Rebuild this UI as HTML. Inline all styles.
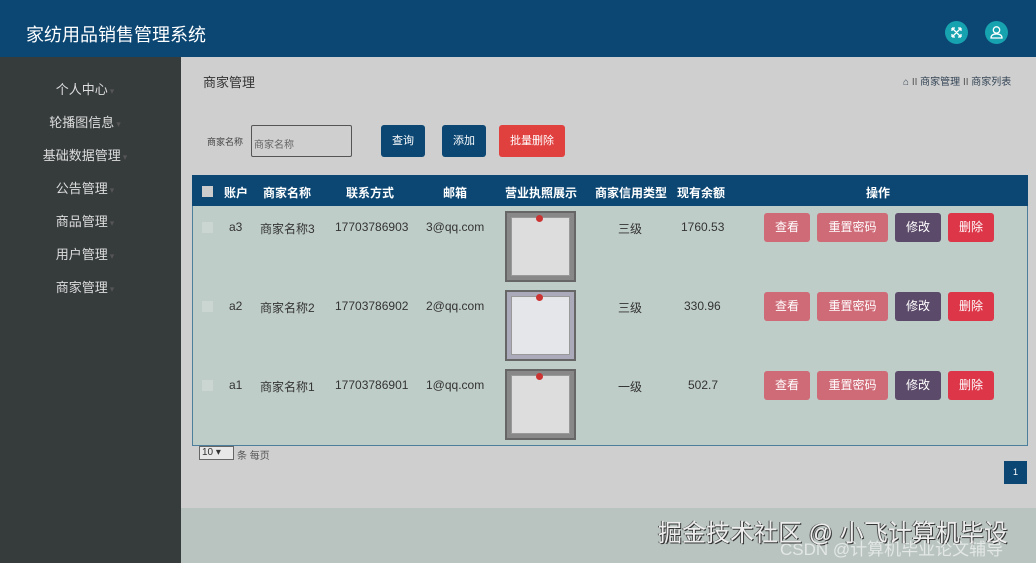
<!DOCTYPE html>
<html><head><meta charset="utf-8">
<style>
*{margin:0;padding:0;box-sizing:border-box}
body{width:1036px;height:563px;overflow:hidden;background:#cfcfcf;font-family:"Liberation Sans","Noto Sans CJK SC",sans-serif;position:relative;color:#333}
.a{position:absolute}
.hdr{left:0;top:0;width:1036px;height:57px;background:#0c4773}
.side{left:0;top:57px;width:181px;height:506px;background:#363b3c}
.mi{position:absolute;width:170px;text-align:center;color:#ddd;font-size:13px}
.mi span{color:#555;font-size:9px;margin-left:2px}
.btn{position:absolute;color:#fff;font-size:11px;text-align:center;border-radius:3px}
.th{position:absolute;top:184px;color:#fff;font-size:12px;font-weight:bold;text-align:center}
.td{position:absolute;font-size:12px;color:#333;text-align:center}
.img{position:absolute;left:505px;width:71px;height:71px;background:#888;border:2px solid #666}
.img div{position:absolute;left:4px;top:4px;right:4px;bottom:4px;background:#ddd;border:1px solid #999}
.img i{position:absolute;left:29px;top:2px;width:7px;height:7px;border-radius:50%;background:#c33}
.ob{position:absolute;height:29px;line-height:29px;color:#fff;font-size:12px;text-align:center;border-radius:3px}
</style></head><body>
<div class="a hdr"></div>
<div class="a" style="left:26px;top:21px;color:#fff;font-size:18px">家纺用品销售管理系统</div>
<div class="a" style="left:945px;top:21px;width:23px;height:23px;border-radius:50%;background:#17a2b0"><svg width="23" height="23" viewBox="0 0 23 23"><path d="M7 7l9 9M16 7l-9 9M7 7h3M7 7v3M16 16h-3M16 16v-3M16 7h-3M16 7v3M7 16h3M7 16v-3" stroke="#fff" stroke-width="1.3" fill="none"/></svg></div>
<div class="a" style="left:985px;top:21px;width:23px;height:23px;border-radius:50%;background:#17a2b0"><svg width="23" height="23" viewBox="0 0 23 23"><circle cx="11.5" cy="9" r="3.2" stroke="#fff" stroke-width="1.3" fill="none"/><path d="M6 17q0-4 5.5-4t5.5 4z" stroke="#fff" stroke-width="1.3" fill="none"/></svg></div>
<div class="a side"></div>
<div class="mi" style="top:79px">个人中心<span>▾</span></div>
<div class="mi" style="top:112px">轮播图信息<span>▾</span></div>
<div class="mi" style="top:145px">基础数据管理<span>▾</span></div>
<div class="mi" style="top:178px">公告管理<span>▾</span></div>
<div class="mi" style="top:211px">商品管理<span>▾</span></div>
<div class="mi" style="top:244px">用户管理<span>▾</span></div>
<div class="mi" style="top:277px">商家管理<span>▾</span></div>
<div class="a" style="left:203px;top:72px;font-size:13px;color:#333">商家管理</div>
<div class="a" style="left:903px;top:73px;font-size:10px;color:#345">⌂ <span style="color:#555">II</span> 商家管理 <span style="color:#555">II</span> 商家列表</div>
<div class="a" style="left:207px;top:135px;font-size:9px;color:#444">商家名称</div>
<div class="a" style="left:251px;top:125px;width:101px;height:32px;border:1px solid #555;border-radius:2px;font-size:10px;color:#666;padding:10px 2px">商家名称</div>
<div class="btn" style="left:381px;top:125px;width:44px;height:32px;line-height:32px;background:#0c4773">查询</div>
<div class="btn" style="left:442px;top:125px;width:44px;height:32px;line-height:32px;background:#0c4773">添加</div>
<div class="btn" style="left:499px;top:125px;width:66px;height:32px;line-height:32px;background:#e0403e">批量删除</div>
<div class="a" style="left:192px;top:175px;width:836px;height:271px;background:#bfcdc8;border:1px solid #4d7f9d"></div>
<div class="a" style="left:192px;top:175px;width:836px;height:31px;background:#0c4773"></div>
<div class="a" style="left:202px;top:186px;width:11px;height:11px;background:#ccc"></div>
<div class="th" style="left:224px">账户</div>
<div class="th" style="left:263px">商家名称</div>
<div class="th" style="left:346px">联系方式</div>
<div class="th" style="left:443px">邮箱</div>
<div class="th" style="left:505px">营业执照展示</div>
<div class="th" style="left:595px">商家信用类型</div>
<div class="th" style="left:677px">现有余额</div>
<div class="th" style="left:866px">操作</div>

<div class="a" style="left:202px;top:222px;width:11px;height:11px;background:#cbd5d2"></div>
<div class="td" style="left:229px;top:220px">a3</div>
<div class="td" style="left:260px;top:220px">商家名称3</div>
<div class="td" style="left:335px;top:220px">17703786903</div>
<div class="td" style="left:426px;top:220px">3@qq.com</div>
<div class="img" style="top:211px"><div></div><i></i></div>
<div class="td" style="left:618px;top:220px">三级</div>
<div class="td" style="left:681px;top:220px">1760.53</div>
<div class="ob" style="left:764px;top:213px;width:46px;background:#cf6a77">查看</div>
<div class="ob" style="left:817px;top:213px;width:71px;background:#cf6a77">重置密码</div>
<div class="ob" style="left:895px;top:213px;width:46px;background:#5b4a69">修改</div>
<div class="ob" style="left:948px;top:213px;width:46px;background:#dc3648">删除</div>

<div class="a" style="left:202px;top:301px;width:11px;height:11px;background:#cbd5d2"></div>
<div class="td" style="left:229px;top:299px">a2</div>
<div class="td" style="left:260px;top:299px">商家名称2</div>
<div class="td" style="left:335px;top:299px">17703786902</div>
<div class="td" style="left:426px;top:299px">2@qq.com</div>
<div class="img" style="top:290px;background:#aab"><div style="background:#e4e6ea"></div><i></i></div>
<div class="td" style="left:618px;top:299px">三级</div>
<div class="td" style="left:684px;top:299px">330.96</div>
<div class="ob" style="left:764px;top:292px;width:46px;background:#cf6a77">查看</div>
<div class="ob" style="left:817px;top:292px;width:71px;background:#cf6a77">重置密码</div>
<div class="ob" style="left:895px;top:292px;width:46px;background:#5b4a69">修改</div>
<div class="ob" style="left:948px;top:292px;width:46px;background:#dc3648">删除</div>

<div class="a" style="left:202px;top:380px;width:11px;height:11px;background:#cbd5d2"></div>
<div class="td" style="left:229px;top:378px">a1</div>
<div class="td" style="left:260px;top:378px">商家名称1</div>
<div class="td" style="left:335px;top:378px">17703786901</div>
<div class="td" style="left:426px;top:378px">1@qq.com</div>
<div class="img" style="top:369px"><div></div><i></i></div>
<div class="td" style="left:618px;top:378px">一级</div>
<div class="td" style="left:688px;top:378px">502.7</div>
<div class="ob" style="left:764px;top:371px;width:46px;background:#cf6a77">查看</div>
<div class="ob" style="left:817px;top:371px;width:71px;background:#cf6a77">重置密码</div>
<div class="ob" style="left:895px;top:371px;width:46px;background:#5b4a69">修改</div>
<div class="ob" style="left:948px;top:371px;width:46px;background:#dc3648">删除</div>

<div class="a" style="left:199px;top:446px;width:35px;height:14px;border:1px solid #666;background:#e8e8e8;font-size:10px;line-height:12px;padding-left:2px">10 ▾</div>
<div class="a" style="left:237px;top:447px;font-size:10px;color:#555">条 每页</div>
<div class="a" style="left:1004px;top:461px;width:23px;height:23px;background:#0c4773;color:#fff;font-size:9px;text-align:center;line-height:23px">1</div>
<div class="a" style="left:181px;top:508px;width:855px;height:55px;background:#b9c4c0"></div>
<div class="a" style="left:658px;top:513px;font-size:24px;color:#eee;text-shadow:1px 1px 0 #333,-1px 0 0 #555;white-space:nowrap">掘金技术社区 @ 小飞计算机毕设</div>
<div class="a" style="left:780px;top:535px;font-size:17px;color:rgba(255,255,255,.6);white-space:nowrap">CSDN @计算机毕业论文辅导</div>
</body></html>
